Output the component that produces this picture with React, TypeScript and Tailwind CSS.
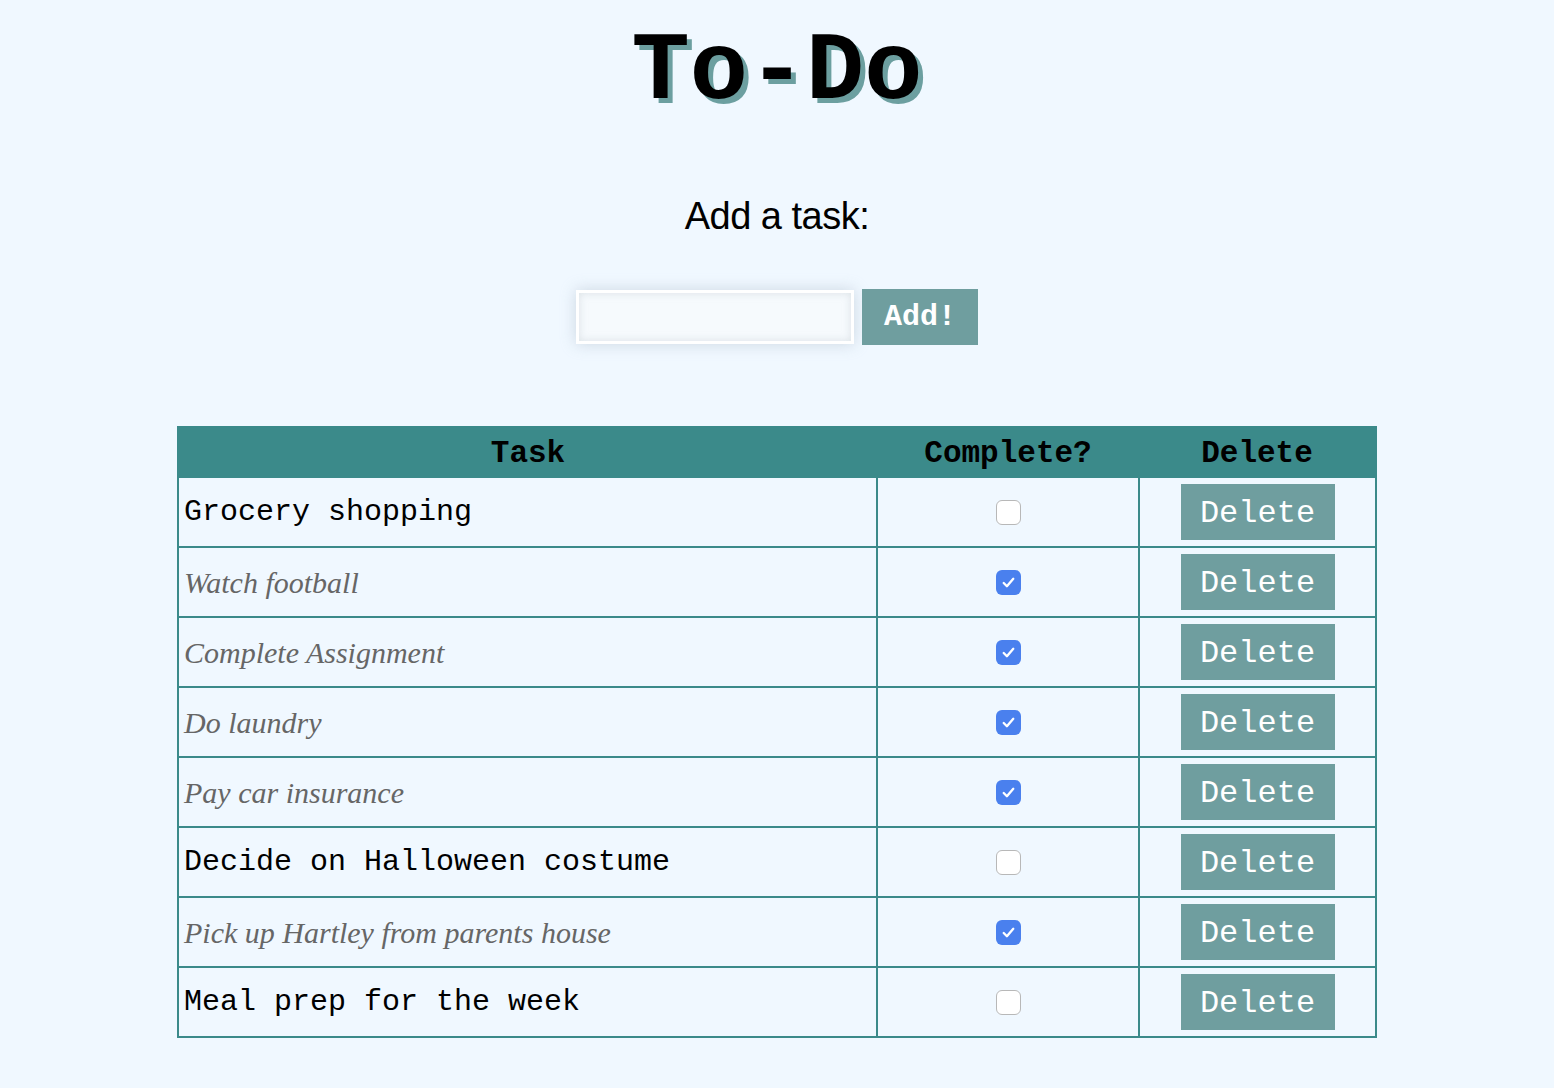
import React, { useState } from 'react';

interface Task {
  id: number;
  text: string;
  done: boolean;
}

const initialTasks: Task[] = [
  { id: 1, text: 'Grocery shopping', done: false },
  { id: 2, text: 'Watch football', done: true },
  { id: 3, text: 'Complete Assignment', done: true },
  { id: 4, text: 'Do laundry', done: true },
  { id: 5, text: 'Pay car insurance', done: true },
  { id: 6, text: 'Decide on Halloween costume', done: false },
  { id: 7, text: 'Pick up Hartley from parents house', done: true },
  { id: 8, text: 'Meal prep for the week', done: false },
];

const mono = "font-['Liberation_Mono','Courier_New',monospace]";

const Checkbox = ({ checked, onChange }: { checked: boolean; onChange: () => void }) => (
  <button
    type="button"
    role="checkbox"
    aria-checked={checked}
    onClick={onChange}
    className={`inline-flex h-[25px] w-[25px] items-center justify-center rounded-[6px] align-middle ${
      checked ? 'bg-[#4a80ee]' : 'border border-[#b8b8b8] bg-white'
    }`}
  >
    {checked && (
      <svg viewBox="0 0 16 16" className="h-[17px] w-[17px]" fill="none">
        <path d="M3.5 8.5l3 3 6-7" stroke="white" strokeWidth="2.2" strokeLinecap="round" strokeLinejoin="round" />
      </svg>
    )}
  </button>
);

const App = () => {
  const [tasks, setTasks] = useState<Task[]>(initialTasks);
  const [draft, setDraft] = useState('');

  const addTask = () => {
    if (!draft.trim()) return;
    setTasks([...tasks, { id: Date.now(), text: draft.trim(), done: false }]);
    setDraft('');
  };

  const toggle = (id: number) =>
    setTasks(tasks.map((t) => (t.id === id ? { ...t, done: !t.done } : t)));

  const remove = (id: number) => setTasks(tasks.filter((t) => t.id !== id));

  return (
    <div className="min-h-screen bg-[#f0f8ff] pb-12 text-black">
      <h1
        className={`${mono} pt-[14px] text-center text-[97px] font-bold leading-[116px] [text-shadow:5px_5px_0_#6c9fa0]`}
      >
        To-Do
      </h1>

      <h2 className="mt-[61px] text-center font-['Liberation_Sans',Arial,sans-serif] text-[38px] leading-[50px] tracking-[-0.5px]">
        Add a task:
      </h2>

      <div className="mt-[48px] flex items-center justify-center gap-2">
        <input
          type="text"
          value={draft}
          onChange={(e) => setDraft(e.target.value)}
          className={`${mono} h-[54px] w-[278px] border-[3px] border-white bg-[#f6fafd] px-2 text-[24px] shadow-[0_0_14px_rgba(160,175,190,0.45),inset_0_0_8px_rgba(170,180,190,0.35)] outline-none`}
        />
        <button
          type="button"
          onClick={addTask}
          className={`${mono} h-[56px] w-[116px] bg-[#6f9e9f] text-[30px] font-bold text-white`}
        >
          Add!
        </button>
      </div>

      <table className="mx-auto mt-[81px] w-[1200px] border-collapse border-2 border-[#3b8a8a]">
        <thead>
          <tr className="h-[50px] bg-[#3b8a8a]">
            <th className={`${mono} w-[699px] pt-1 text-[31px] font-bold leading-[40px]`}>Task</th>
            <th className={`${mono} w-[262px] pt-1 text-[31px] font-bold leading-[40px]`}>Complete?</th>
            <th className={`${mono} pt-1 text-[31px] font-bold leading-[40px]`}>Delete</th>
          </tr>
        </thead>
        <tbody>
          {tasks.map((t) => (
            <tr key={t.id} className="h-[70px] border-t-2 border-[#3b8a8a]">
              <td className="border-r-2 border-[#3b8a8a] px-[5px]">
                {t.done ? (
                  <span className="font-['Liberation_Serif','Times_New_Roman',serif] text-[30px] italic text-[#666666]">
                    {t.text}
                  </span>
                ) : (
                  <span className={`${mono} text-[30px]`}>{t.text}</span>
                )}
              </td>
              <td className="border-r-2 border-[#3b8a8a] text-center">
                <Checkbox checked={t.done} onChange={() => toggle(t.id)} />
              </td>
              <td className="text-center">
                <button
                  type="button"
                  onClick={() => remove(t.id)}
                  className={`${mono} h-[56px] w-[154px] bg-[#6f9e9f] pt-[3px] text-[32px] text-white`}
                >
                  Delete
                </button>
              </td>
            </tr>
          ))}
        </tbody>
      </table>
    </div>
  );
};

export default App;
